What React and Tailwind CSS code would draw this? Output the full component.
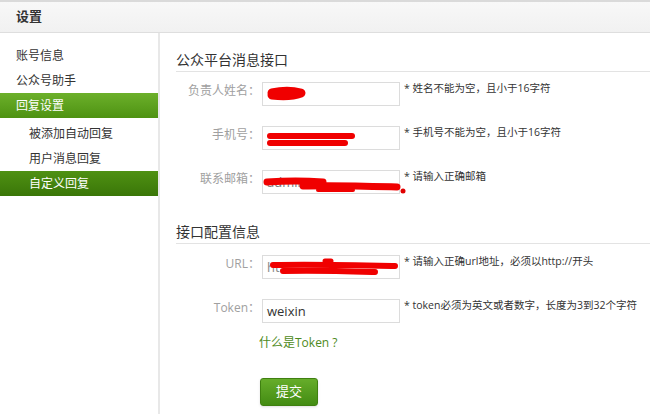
import React from "react";

// red marker strokes that hide the private values in the reference
function Scribble({ strokes, dots = [] }) {
  return (
    <svg className="absolute inset-0 overflow-visible" width="138" height="24">
      {strokes.map((s, i) => (
        <path
          key={i}
          d={s.d}
          stroke="#f00000"
          strokeWidth={s.w}
          strokeLinecap="round"
          strokeLinejoin="round"
          fill="none"
        />
      ))}
      {dots.map((d, i) => (
        <circle key={i} cx={d[0]} cy={d[1]} r={d[2]} fill="#e00000" />
      ))}
    </svg>
  );
}

function Field({ label, hint, value, scribble }) {
  return (
    <div className="flex items-start h-[24px]">
      <div className="w-[86px] pr-[2px] text-right text-[12px] leading-[18px] text-[#a0a0a0]">
        {label}
      </div>
      <div className="relative w-[138px] h-[24px] border border-[#dcdcdc] bg-white pl-[4px] text-[13px] leading-[22px] text-[#333]">
        {value}
        {scribble}
      </div>
      <div className="ml-[4px] -mt-[1px] text-[10.5px] leading-[14px] text-[#333] whitespace-nowrap">
        * {hint}
      </div>
    </div>
  );
}

function SectionTitle({ children, className = "" }) {
  return (
    <div className={"text-[14px] leading-[20px] text-[#333] pb-[1px] border-b border-[#e3e3e3] " + className}>
      {children}
    </div>
  );
}

export default function App() {
  return (
    <div className="w-[650px] h-[414px] bg-white overflow-hidden flex flex-col font-['Open_Sans','Noto_Sans_CJK_SC',sans-serif]">
      <div className="h-[33px] shrink-0 border-t-2 border-b border-t-[#dadada] border-b-[#dedede] bg-gradient-to-b from-[#f8f8f8] to-[#f1f1f1] pl-4 flex items-center text-[13px] font-bold text-[#333]">
        设置
      </div>

      <div className="flex flex-1">
        {/* sidebar */}
        <div className="w-[160px] shrink-0 border-r-2 border-[#e8e8e8] pt-[10px] text-[12px] text-[#333]">
          <div className="h-[25px] leading-[25px] pl-4">账号信息</div>
          <div className="h-[25px] leading-[25px] pl-4">公众号助手</div>
          <div className="h-[25px] leading-[25px] pl-4 text-white bg-gradient-to-b from-[#6cb02a] to-[#4e9211]">
            回复设置
          </div>
          <div className="mt-[3px] h-[25px] leading-[25px] pl-[29px]">被添加自动回复</div>
          <div className="h-[25px] leading-[25px] pl-[29px]">用户消息回复</div>
          <div className="h-[25px] leading-[25px] pl-[29px] text-white bg-gradient-to-b from-[#4f9113] to-[#3a7608]">
            自定义回复
          </div>
        </div>

        {/* main form */}
        <div className="flex-1 pl-4 pt-[17px]">
          <SectionTitle>公众平台消息接口</SectionTitle>
          <div className="mt-[10px] flex flex-col gap-5">
            <Field
              label="负责人姓名："
              hint="姓名不能为空，且小于16字符"
              scribble={<Scribble strokes={[{ d: "M9 10 C18 8 30 8 38 10 C30 13 18 13 9 12", w: 9 }]} />}
            />
            <Field
              label="手机号："
              hint="手机号不能为空，且小于16字符"
              scribble={
                <Scribble
                  strokes={[
                    { d: "M7 9 L89 9", w: 6 },
                    { d: "M7 16 L82 16", w: 6 },
                  ]}
                />
              }
            />
            <Field
              label="联系邮箱："
              hint="请输入正确邮箱"
              value={<span className="text-[#777]">admin@</span>}
              scribble={
                <Scribble
                  strokes={[
                    { d: "M4 11 C20 10 45 10 60 11", w: 7 },
                    { d: "M40 15 C70 14 100 15 134 16", w: 7 },
                    { d: "M55 19 L90 19", w: 4 },
                  ]}
                  dots={[[140, 20, 2.5]]}
                />
              }
            />
          </div>

          <SectionTitle className="mt-[28px]">接口配置信息</SectionTitle>
          <div className="mt-[11px] flex flex-col gap-5">
            <Field
              label="URL："
              hint="请输入正确url地址，必须以http://开头"
              value={<span className="text-[#888]">ht</span>}
              scribble={
                <Scribble
                  strokes={[
                    { d: "M10 9 C50 8 90 9 132 10", w: 6 },
                    { d: "M20 15 C50 14 80 15 112 16", w: 6 },
                    { d: "M62 5 L68 5", w: 5 },
                  ]}
                />
              }
            />
            <Field label="Token：" hint="token必须为英文或者数字，长度为3到32个字符" value="weixin" />
          </div>

          <div className="mt-[12px] ml-[83px] text-[12px] leading-[16px] text-[#4e8a22]">什么是Token ?</div>

          <button className="mt-[27px] ml-[84px] w-[58px] h-[28px] rounded-[3px] border border-[#3f8010] bg-gradient-to-b from-[#66ad2a] to-[#438c12] text-white text-[13px] shadow-sm">
            提交
          </button>
        </div>
      </div>
    </div>
  );
}
